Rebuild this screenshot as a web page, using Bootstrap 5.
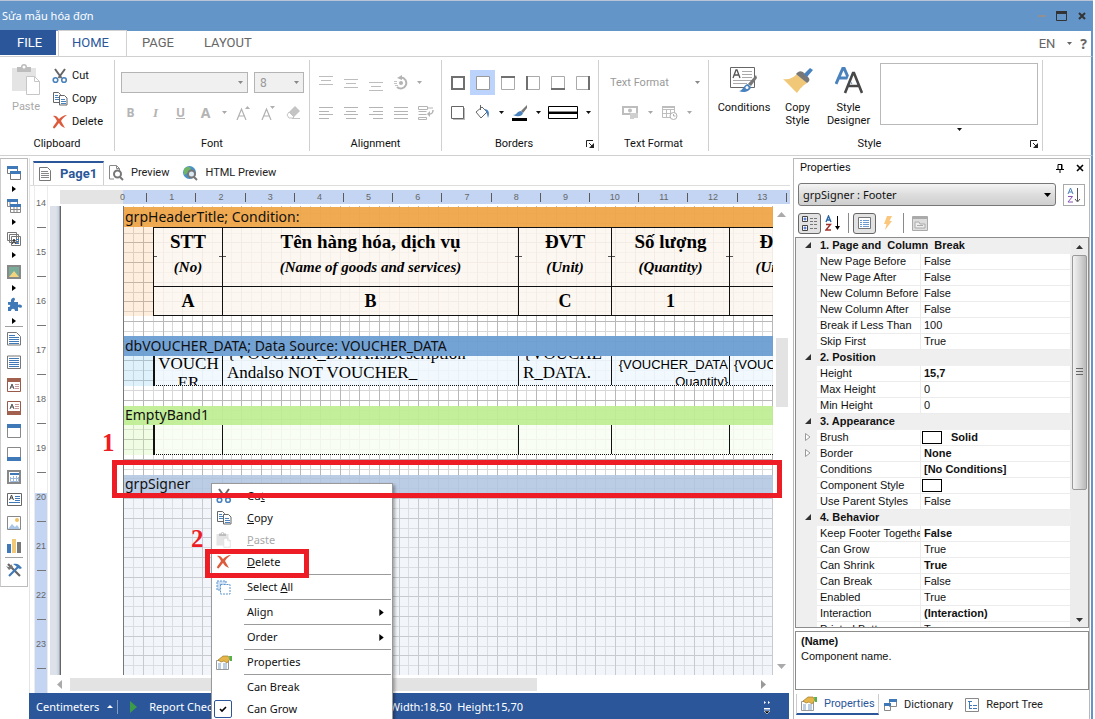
<!DOCTYPE html>
<html lang="vi">
<head>
<meta charset="utf-8">
<meta name="viewport" content="width=device-width, initial-scale=1">
<title>Sửa mẫu hóa đơn</title>
<link href="https://cdn.jsdelivr.net/npm/bootstrap@5.3.0/dist/css/bootstrap.min.css" rel="stylesheet">
<style>
:root{--ui:"Noto Sans","Open Sans",sans-serif;--rib:Roboto,"Open Sans",sans-serif;--navy:#2b579a;--sky:#6495c8;--rule:#d0d0d0}
body{font:11px/16px var(--ui);color:#111;background:#fff;overflow:hidden}
button{border:0;background:none;padding:0;color:inherit;font:inherit}
svg{display:block;flex:none}
.frame-edge{border-right:2px solid var(--sky);margin-right:2px}
.titlebar{height:31px;background:var(--sky);border-top:1px solid #b9c4d8;color:#fff;padding-left:2px;padding-right:5px;margin-right:2px}
.ribbon-tabs{height:26px;border-bottom:1px solid var(--rule)}
.ribbon-tabs .nav-link{font:13px/24px var(--rib);height:25px;padding:0 14px;color:#666;border:1px solid transparent;border-bottom:0;border-radius:0}
.ribbon-tabs .file-tab{background:var(--navy);color:#fff;width:56px;padding:0 16px}
.ribbon-tabs .nav-link.active{color:var(--navy);border-color:var(--rule);background:#fff;height:26px;width:69px;margin:0 0 0 2px;padding:0 13px}
.ribbon{height:99px;border-bottom:1px solid var(--rule);padding-top:3px;font-family:var(--rib);line-height:13px}
.rgroup{height:91px;border-right:1px solid var(--rule)}
.rgroup>.ps-1{padding-left:3px!important}
.rgroup .glabel{height:14px;margin-bottom:0}
.r-on{height:25px;align-items:center}
.r-top{padding-top:10px;row-gap:5px}
.cell{width:25px;height:25px;display:flex;align-items:center;justify-content:center}
.cell.on{background:#bcd3fb}
.wctl{width:12px}
.drop{width:12px;height:25px;display:flex;align-items:center;justify-content:center}
.dim{color:#a8a8a8}
.glyph{font:bold 14px/25px var(--ui);color:#b4b4b4}
.glyph.s{font-size:12px}
.pick{appearance:none;border:1px solid #b4b4b4;background:#f0f0f0 url("data:image/svg+xml,%3Csvg xmlns='http://www.w3.org/2000/svg' width='5' height='3'%3E%3Cpath d='M0 0h5L2.5 3z' fill='%23888'/%3E%3C/svg%3E") no-repeat right 4px center;height:21px;padding:0 5px;color:#999;font:12px/18px var(--rib);border-radius:0}
.pick.flat{border:0;background-color:transparent;font-size:11px;padding:0 3px}
.bigbtn{display:flex;flex-direction:column;align-items:center;width:51px;padding-top:7px;gap:7px}
.bigbtn.wide{width:56px}
.gallery{width:158px;height:62px;border:1px solid #b9b9b9}
.toolcol{width:28px;border:1px solid #bcbcbc;border-left-color:#ccc;padding:2px 0 5px}
.toolcol button{height:23px;width:100%;display:flex;justify-content:center;align-items:center}
.toolcol .more{height:10px}
.toolcol hr{margin:0 4px;opacity:.4}
.doc-tabs{height:28px;border-bottom:1px solid #ddd;font:12px/16px var(--rib);padding-left:3px}
.doc-tabs a{color:#222;text-decoration:none;display:flex;align-items:center;gap:7px}
.doc-tabs a.current{color:var(--navy);font-weight:bold;font-size:13px;border:1px solid var(--rule);border-top:2px solid var(--navy);border-bottom:0;width:71px;height:24px;padding:0 5px;gap:9px;background:#fff}
.doc-tabs a.idle{height:24px;padding:0 5px;font-size:11px}
.docarea{border-left:1px solid #e4e4e4;min-width:0;flex:1 1 0;margin-left:1px}
.ruler-h{height:14px;margin-left:12px;background:linear-gradient(90deg,#e4e4e4 63px,#c3d5f3 63px);overflow:hidden;padding-left:38px}
.ruler-h ol{width:738px;height:14px;margin:0;padding:0;list-style:none}
.ruler-h li{flex:1;text-align:center;background:linear-gradient(#5a5a5a,#5a5a5a) right center/1px 9px no-repeat}
.ruler-h li,.ruler-v li{font:9px/14px "Liberation Sans",Arial,sans-serif;color:#666}
.ruler-v{width:14px;margin-left:4px;border:1px solid #ececec;border-width:0 1px;background:linear-gradient(#fff 307px,#c3d5f3 307px)}
.ruler-v ol{margin:0;padding:0;list-style:none}
.ruler-v li{height:49px;line-height:48px;text-align:center;background:linear-gradient(#777,#777) center bottom/9px 1px no-repeat}
.ruler-v li.cut{height:42px;line-height:34px}
.gutter{width:11px;background:linear-gradient(90deg,#dde2ea 60%,#c9d2df 85%,#8e959e);border-right:1px solid #666}
.page-blank{width:62px;background:#fff}
.page-grid{border-left:1px solid #777;overflow:hidden;min-width:0;padding-top:1px;background-color:#fff;
 background-image:
  linear-gradient(90deg,transparent 19px,#b8b8b8 19px 20px,transparent 20px 39px,#b8b8b8 39px 40px,transparent 40px 58px,#b8b8b8 58px),
  linear-gradient(#b8b8b8 1px,transparent 1px 20px,#b8b8b8 20px 21px,transparent 21px 39px,#b8b8b8 39px 40px,transparent 40px),
  linear-gradient(90deg,transparent 9px,#d8d8d8 9px 10px,transparent 10px 29px,#d8d8d8 29px 30px,transparent 30px 48px,#d8d8d8 48px 49px,transparent 49px),
  linear-gradient(transparent 10px,#d8d8d8 10px 11px,transparent 11px 30px,#d8d8d8 30px 31px,transparent 31px 49px,#d8d8d8 49px 50px,transparent 50px);
 background-size:59px 59px;background-position:0 -3px}
.band{height:20px;font:14px/20px var(--ui);padding-left:1px;white-space:nowrap;flex:none}
.band.orange{background:#efa548f2}.band.blue{background:#6b9dd3f2}
.band.green{background:#beed92ed;height:19px;line-height:18px}.band.steel{background:#b4c7e2e6;height:19px;line-height:18px}
.band-body{padding-left:29px;margin-bottom:20px}
.tint-o{background:#f8b06a38}.tint-b{background:#9fd4f455}.tint-g{background:#d6f7b055}.tint-s{background:#dfe8f466}
.rep{table-layout:fixed;width:700px;border-collapse:separate;border-spacing:0;font-family:"Liberation Serif","Times New Roman",serif;color:#000;text-align:center}
.rep col.c1{width:69px}.rep col.c2{width:296px}.rep col.c3{width:93px}.rep col.c4{width:118px}.rep col.c5{width:124px}
.rep td,.rep th{padding:0;border-left:2px solid #111;vertical-align:top}
.rep th+th,.rep td+td{border-left-width:1px}
.rep th{border-left-width:1px}
.tint-o .rep{background:#fcf9f6cc}.tint-b .rep{background:#f6fbffcc}.tint-g .rep{background:#fbfef8cc}
.rep .hd th{border-top:1px solid #111;height:59px;background:linear-gradient(#555,#555) 0 28px/3px 1px no-repeat,linear-gradient(#555,#555) 100% 28px/3px 1px no-repeat}
.rep .hd b{display:block;font-size:19px;line-height:27px}
.rep .hd i{display:block;font-size:15px;line-height:25px}
.rep .letters th{border-top:1px solid #111;border-bottom:1px solid #111;height:30px;font-size:18px;line-height:28px}
.rep .clip{height:29px;overflow:hidden;display:flex;flex-direction:column;justify-content:center;font-size:17px;line-height:19px;white-space:nowrap;padding-top:4px}
.rep .clip.sans{font:13px/17px "Liberation Sans",Arial,sans-serif;text-align:right;padding:5px 1px 0 0}
.tint-b .rep,.tint-g .rep{border-bottom:1px dotted #111}
.vscroll{width:17px;padding:6px 2px}
.vscroll .thumb{width:12px;height:69px;background:#e3e3e3;margin-top:121px}
.hscroll{height:18px;padding-left:27px;padding-right:24px}
.hscroll .thumb{width:467px;height:13px;background:#e3e3e3;margin-left:8px}
.status{height:26px;background:var(--navy);color:#fff;padding:1px 18px 0 7px;margin-left:-1px;margin-right:1px}
.status .size{margin-right:240px}
.ctx{left:181px;top:325px;width:182px;background:#fff;border:1px solid #999;box-shadow:2px 2px 3px #0005;z-index:2;padding-top:1px}
.ctx button{display:flex;align-items:center;height:22px;width:100%;color:#111;text-align:left}
.ctx button:disabled{color:#a8a8a8}
.ctx .ico{width:35px;padding-left:4px}
.ctx hr{margin:1px 1px 1px 32px;border:0;border-top:1px solid #9b9b9b;opacity:1}
.ctx .tick{display:flex;width:18px;height:18px;border:1px solid var(--navy);border-radius:2px;margin-left:-2px;align-items:center;justify-content:center}
.callout{border:5px solid #ee1c25;z-index:3;pointer-events:none}
.callout-row{left:82px;right:8px;top:302px;height:38px}
.callout-item{left:175px;top:391px;width:104px;height:29px}
.num{font:bold 25px/26px "Liberation Serif",serif;color:#ee1c25;z-index:3}
.num-1{left:72px;top:272px}.num-2{left:161px;top:368px}
.side{width:297px;border:1px solid #b9b9b9;border-bottom:0;margin-left:3px;margin-right:1px;font:11px/16px "Liberation Sans",Arial,sans-serif}
.side .head{font:11px/18px var(--rib);padding:0 4px 0 6px;height:19px}
.objrow{padding:6px 4px 5px 4px;gap:7px}
.objsel{appearance:none;border:1px solid #777;border-radius:3px;height:23px;width:260px;padding:0 4px;font:11px/18px var(--ui);color:#111;background:url("data:image/svg+xml,%3Csvg xmlns='http://www.w3.org/2000/svg' width='7' height='4'%3E%3Cpath d='M0 0h7L3.5 4z'/%3E%3C/svg%3E") no-repeat right 4px center,linear-gradient(#f4f4f4,#ddd 50%,#cfcfcf)}
.sq{width:22px;height:22px;border:1px solid #aaa;display:flex;align-items:center;justify-content:center;flex:none}
.pbar{padding:0 4px;height:24px;margin-bottom:2px}
.pbtn{width:23px;height:21px;display:flex;align-items:center;justify-content:center}
.pbtn.on{border:1px solid #666;border-radius:3px;background:#e2e2e2}
.vr1{width:1px;height:20px;background:#8a8a8a}
.props{border:1px solid #8c8c8c;margin:0 0 0 1px;min-height:0;overflow:hidden;background:#efefef}
.pt{width:275px;table-layout:fixed;border-collapse:separate;border-spacing:0}
.pt col.c1{width:21px}.pt col.c2{width:104px}
.pt th,.pt td{height:16px;padding:0;white-space:nowrap;overflow:hidden;font-weight:normal;line-height:15px}
.pt td,.pt tbody th{background:#fff;border-bottom:1px solid #ececec;border-right:1px solid #ececec;padding-left:3px}
.pt tbody td.g{background:#efefef;border-color:#efefef;padding-left:9px}
.pt tbody th.cat{background:#efefef;border:0;font-weight:bold;white-space:pre}
.swatch{display:inline-block;width:20px;height:13px;border:1px solid #000;vertical-align:middle;margin-left:-2px;margin-right:9px;background:#fff}
.pscroll{width:17px;background:#ececec;padding:7px 0 5px;row-gap:6px}
.pscroll .bar{height:235px;width:15px;border:1px solid #999;border-radius:2px;background:linear-gradient(90deg,#f3f3f3,#d8d8d8 50%,#b9b9b9)}
.desc{height:59px;border:1px solid #8c8c8c;margin:3px 0 0 1px;padding:2px 5px;line-height:15px;flex:none}
.side-tabs{height:29px;padding-top:4px;font:11px/16px var(--rib);margin-left:2px;flex:none}
.side-tabs a{display:flex;align-items:center;gap:7px;color:#222;text-decoration:none;height:21px;padding:0 7px 0 5px}
.side-tabs a.current{color:var(--navy);border-bottom:2px solid var(--navy);border-right:1px solid #ccc;border-left:1px solid #ccc;width:83px;padding-left:4px}
</style>
</head>
<body class="vh-100 d-flex flex-column">
<svg width="0" height="0" class="position-absolute" aria-hidden="true">
 <symbol id="cut" viewBox="0 0 16 16"><path d="M3 1l6.500 9M13 1L6.500 10" stroke="#666" stroke-width="2" fill="none"/><g fill="none" stroke="#4a82bd" stroke-width="1.600"><circle cx="3.500" cy="12" r="2.300"/><circle cx="12" cy="12" r="2.300"/></g></symbol>
 <symbol id="copy" viewBox="0 0 16 16"><path d="M1.500 1.500h5l2 2v8h-7z" fill="#fff" stroke="#666"/><path d="M3 4.500h3M3 6.500h4M3 8.500h4" stroke="#4a82bd"/><path d="M7.500 4.500h5l2.500 2.500v7H7.500z" fill="#fff" stroke="#666"/><path d="M9 8.500h4M9 10.500h5M9 12.500h5" stroke="#4a82bd"/></symbol>
 <symbol id="del" viewBox="0 0 16 16"><path d="M1 2c2-1 4 0 6 3 2-2 5-4 8-4-3 2-5 4-6 6l4 7c-3-1-5-3-6-5-2 2-3 4-4 5-1 1-2 0-2-1 1-2 3-4 4-6C4 5 3 3 1 2z" fill="#dc5b3c"/></symbol>
 <symbol id="paste" viewBox="0 0 30 32"><path d="M1 4h24v9H15v14H1z" fill="#e4e4e4"/><path d="M6 3h4a3 3 0 0 1 6 0h4v5H6z" fill="#bdbdbd"/><circle cx="13" cy="3" r="1.500" fill="#fff"/><path d="M15.500 12.500h8l5 5v13h-13zM23.500 12.500v5h5" fill="#fff" stroke="#c6c6c6"/></symbol>
 <symbol id="dn" viewBox="0 0 5 3"><path d="M0 0h5L2.500 3z" fill="currentColor"/></symbol>
 <symbol id="rt" viewBox="0 0 4 6"><path d="M0 0l4 3-4 3z" fill="#000"/></symbol>
 <symbol id="launch" viewBox="0 0 8 8"><path d="M.5 7V.5H7" fill="none" stroke="#222"/><path d="M3 3l3 3" stroke="#222"/><path d="M8 3v5H3z" fill="#222"/></symbol>
 <symbol id="hand" viewBox="0 0 16 15"><path d="M.5 5.500h12v9H.5z" fill="#fff" stroke="#999"/><path d="M2 9h3M7 9h4M2 11h3M7 11h4M2 13h3M7 13h4" stroke="#7f9ec4"/><path d="M2 5l5-4h5l2 3-3 4-3-2-3 1z" fill="#e5b54a" stroke="#a17a2a" stroke-width=".7"/><path d="M13 1h3v5h-2z" fill="#55b24a"/></symbol>
</svg>

<header class="titlebar d-flex align-items-center justify-content-between flex-shrink-0">
 <span>Sửa mẫu hóa đơn</span>
 <div class="d-flex align-items-center gap-2">
  <button class="cell wctl" aria-label="Minimize"><svg width="8" height="2"><path d="M0 0h8v2H0z" fill="#8f8f94"/></svg></button>
  <button class="cell wctl" aria-label="Maximize"><svg width="12" height="11"><path d="M.5.5h10v9H.5z" fill="none" stroke="#333"/><path d="M0 0h11v3H0z" fill="#333"/></svg></button>
  <button class="cell wctl" aria-label="Close"><svg width="8" height="8"><path d="M1 1l6 6M7 1L1 7" stroke="#333" stroke-width="2"/></svg></button>
 </div>
</header>

<nav class="ribbon-tabs frame-edge d-flex align-items-end justify-content-between flex-shrink-0" aria-label="Ribbon">
 <div class="nav flex-nowrap">
  <a class="nav-link file-tab" href="#">FILE</a>
  <a class="nav-link active" href="#">HOME</a>
  <a class="nav-link" href="#">PAGE</a>
  <a class="nav-link" href="#">LAYOUT</a>
 </div>
 <div class="d-flex align-items-center gap-2 pe-1" style="color:#666">
  <button class="d-flex align-items-center gap-2" style="font:13px/25px var(--rib)">EN <svg class="ms-1" width="5" height="3"><use href="#dn"/></svg></button>
  <button style="font:bold 14px/25px var(--ui)">?</button>
 </div>
</nav>

<section class="ribbon frame-edge d-flex flex-shrink-0" aria-label="Home">
 <div class="rgroup d-flex flex-column" style="width:115px">
  <div class="flex-grow-1 d-flex gap-2 ps-2">
   <button class="d-flex flex-column align-items-center dim gap-1 pt-1" style="width:36px"><svg width="30" height="32"><use href="#paste"/></svg>Paste</button>
   <div class="d-flex flex-column pt-1">
    <button class="d-flex align-items-center gap-1" style="height:23px"><svg width="16" height="16"><use href="#cut"/></svg>Cut</button>
    <button class="d-flex align-items-center gap-1" style="height:23px"><svg width="16" height="16"><use href="#copy"/></svg>Copy</button>
    <button class="d-flex align-items-center gap-1" style="height:23px"><svg width="16" height="16"><use href="#del"/></svg>Delete</button>
   </div>
  </div>
  <div class="glabel text-center">Clipboard</div>
 </div>

 <div class="rgroup d-flex flex-column" style="width:195px">
  <div class="flex-grow-1 d-flex flex-column ps-1 r-top">
   <div class="d-flex r-on" style="gap:6px;padding-left:3px">
    <select class="pick" style="width:127px" aria-label="Font name" disabled><option></option></select>
    <select class="pick" style="width:50px" aria-label="Font size" disabled><option>8</option></select>
   </div>
   <div class="d-flex r-on">
    <button class="cell glyph s">B</button>
    <button class="cell glyph" style="font:italic bold 13px 'Liberation Serif',serif">I</button>
    <button class="cell glyph s text-decoration-underline">U</button>
    <button class="cell glyph">A</button>
    <button class="drop dim" aria-label="Text colour"><svg width="5" height="3"><use href="#dn"/></svg></button>
    <button class="cell dim" aria-label="Grow font"><svg width="14" height="14"><path d="M1 14L5.500 3 10 14M2.500 10h6" fill="none" stroke="#b0b0b0" stroke-width="1.200"/><path d="M9 3h5l-2.500-3z" fill="#b0b0b0"/></svg></button>
    <button class="cell dim" aria-label="Shrink font"><svg width="14" height="14"><path d="M1 14L5.500 3 10 14M2.500 10h6" fill="none" stroke="#b0b0b0" stroke-width="1.200"/><path d="M9 0h5l-2.500 3z" fill="#b0b0b0"/></svg></button>
    <button class="cell" aria-label="Clear"><svg width="14" height="13"><path d="M3 6l6-6 5 5-6 6z" fill="#c4c4c4"/><path d="M3 6l5 5-1 1H3L1 9z" fill="#fff" stroke="#c4c4c4"/><path d="M6 12.500h8" stroke="#c4c4c4"/></svg></button>
   </div>
  </div>
  <div class="glabel text-center">Font</div>
 </div>

 <div class="rgroup d-flex flex-column" style="width:132px">
  <div class="flex-grow-1 d-flex flex-column ps-1 r-top">
   <div class="d-flex r-on">
    <button class="cell" aria-label="Top"><svg width="14" height="14"><path d="M0 .5h14M2 4.500h10M0 8.500h14" stroke="#bdbdbd"/></svg></button>
    <button class="cell" aria-label="Middle"><svg width="14" height="14"><path d="M0 3.500h14M2 7.500h10M0 11.500h14" stroke="#bdbdbd"/></svg></button>
    <button class="cell" aria-label="Bottom"><svg width="14" height="16"><path d="M0 7.500h14M2 11.500h10M0 15.500h14" stroke="#bdbdbd"/></svg></button>
    <button class="cell" aria-label="Rotate"><svg width="14" height="15"><path d="M7 2.500a5.500 5.500 0 1 1-4 9.500" fill="none" stroke="#b4b4b4" stroke-width="2"/><path d="M8 0v5L3 3z" fill="#b4b4b4"/><circle cx="7" cy="8" r="2" fill="#b4b4b4"/><path d="M0 6.500h3M0 8.500h3M1 10.500h3" stroke="#c4c4c4"/></svg></button>
    <button class="drop dim" aria-label="Rotation"><svg width="5" height="3"><use href="#dn"/></svg></button>
   </div>
   <div class="d-flex r-on">
    <button class="cell" aria-label="Left"><svg width="14" height="12"><path d="M0 .5h14M0 4.500h10M0 7.500h14M0 11.500h10" stroke="#b4b4b4"/></svg></button>
    <button class="cell" aria-label="Centre"><svg width="14" height="12"><path d="M0 .5h14M2 4.500h10M0 7.500h14M2 11.500h10" stroke="#b4b4b4"/></svg></button>
    <button class="cell" aria-label="Right"><svg width="14" height="12"><path d="M0 .5h14M4 4.500h10M0 7.500h14M4 11.500h10" stroke="#b4b4b4"/></svg></button>
    <button class="cell" aria-label="Justify"><svg width="14" height="12"><path d="M0 .5h14M0 4.500h14M0 7.500h14M0 11.500h14" stroke="#b4b4b4"/></svg></button>
    <button class="cell" aria-label="Wrap"><svg width="16" height="16"><path d="M.5 1.500h9v3h-9zM.5 6.500h8M.5 9.500h8M.5 12.500h8v2h-8zM10 3h5" fill="none" stroke="#b4b4b4"/><path d="M15 5c0 4-2 4-4 4" fill="none" stroke="#b4b4b4" stroke-width="1.500"/><path d="M12 6v6l-3-3z" fill="#b4b4b4"/></svg></button>
   </div>
  </div>
  <div class="glabel text-center">Alignment</div>
 </div>

 <div class="rgroup d-flex flex-column" style="width:157px">
  <div class="flex-grow-1 d-flex flex-column ps-1 r-top">
   <div class="d-flex r-on">
    <button class="cell" aria-label="All"><svg width="14" height="14"><path d="M1 1h12v12H1z" fill="#fff" stroke="#707070" stroke-width="2"/></svg></button>
    <button class="cell on" aria-label="None"><svg width="14" height="14"><path d="M.5.5h13v13H.5z" fill="#fff" stroke="#999"/></svg></button>
    <button class="cell" aria-label="Top border"><svg width="14" height="14"><path d="M.5.5h13v13H.5z" fill="#fff" stroke="#aaa"/><path d="M0 0h14v2H0z" fill="#707070"/></svg></button>
    <button class="cell" aria-label="Left border"><svg width="14" height="14"><path d="M.5.5h13v13H.5z" fill="#fff" stroke="#aaa"/><path d="M0 0h2v14H0z" fill="#707070"/></svg></button>
    <button class="cell" aria-label="Bottom border"><svg width="14" height="14"><path d="M.5.5h13v13H.5z" fill="#fff" stroke="#aaa"/><path d="M0 12h14v2H0z" fill="#707070"/></svg></button>
    <button class="cell" aria-label="Right border"><svg width="14" height="14"><path d="M.5.5h13v13H.5z" fill="#fff" stroke="#aaa"/><path d="M12 0h2v14h-2z" fill="#707070"/></svg></button>
   </div>
   <div class="d-flex r-on">
    <button class="cell" aria-label="Shadow"><svg width="14" height="14"><path d="M2 2h12v12H2z" fill="#bbb"/><path d="M.5.500h12v12H.5z" fill="#fff" stroke="#666"/></svg></button>
    <button class="cell" aria-label="Fill"><svg width="15" height="15"><path d="M1 7l6-5 5 5-6 6z" fill="#fff" stroke="#666"/><path d="M5.500 0v5" stroke="#666"/><path d="M9 4c5 0 6 4 4 9-1-4-1-6-4-9z" fill="#4a82bd"/></svg></button>
    <button class="drop" aria-label="Fill colour"><svg width="5" height="3"><use href="#dn"/></svg></button>
    <button class="cell" aria-label="Line colour"><svg width="16" height="16"><path d="M9 6l6-6v3l-4 5z" fill="#777"/><path d="M1 10c4 0 4-4 8-4l2 2c-1 4-6 4-10 2z" fill="#4a82bd"/><path d="M0 13h15v3H0z"/></svg></button>
    <button class="drop" aria-label="Line colours"><svg width="5" height="3"><use href="#dn"/></svg></button>
    <button class="d-flex align-items-center gap-2 ms-1" aria-label="Line style"><svg width="30" height="13"><path d="M.5.500h29v12H.5z" fill="#fff" stroke="#000"/><path d="M1 5.500h28" stroke="#888"/><path d="M1 7h28" stroke="#000" stroke-width="2"/></svg><svg width="5" height="3"><use href="#dn"/></svg></button>
   </div>
  </div>
  <div class="glabel d-flex"><span class="flex-grow-1 text-center">Borders</span><button class="pe-1" aria-label="Borders dialog"><svg width="8" height="8"><use href="#launch"/></svg></button></div>
 </div>

 <div class="rgroup d-flex flex-column" style="width:110px">
  <div class="flex-grow-1 d-flex flex-column r-top ps-1">
   <div class="d-flex r-on ps-2 pe-1"><select class="pick flat w-100 ps-0" aria-label="Text format" disabled><option>Text Format</option></select></div>
   <div class="d-flex r-on ps-3" style="gap:1px">
    <button class="cell" aria-label="Currency"><svg width="17" height="15"><path d="M1 2h14v7H1z" fill="none" stroke="#bdbdbd" stroke-width="2"/><circle cx="8" cy="5.500" r="2" fill="#bdbdbd"/><path d="M8 8h8v5h-4v1H8z" fill="#cfcfcf"/></svg></button>
    <button class="drop dim" aria-label="Currency formats"><svg width="5" height="3"><use href="#dn"/></svg></button>
    <button class="cell" aria-label="Date"><svg width="16" height="15"><path d="M.5 1.500h12v11H.5zM.5 4.500h12M4.500 4v8M8.500 4v8M.5 8.500h12" fill="none" stroke="#bdbdbd"/><path d="M0 1h13v2H0z" fill="#bdbdbd"/><circle cx="11.500" cy="11" r="3.500" fill="#fff" stroke="#b0b0b0"/><path d="M11.500 9v2h2" fill="none" stroke="#b0b0b0"/></svg></button>
    <button class="drop dim" aria-label="Date formats"><svg width="5" height="3"><use href="#dn"/></svg></button>
   </div>
  </div>
  <div class="glabel text-center">Text Format</div>
 </div>

 <div class="rgroup d-flex flex-column" style="width:334px">
  <div class="flex-grow-1 d-flex" style="padding-left:7px">
   <button class="bigbtn wide"><svg width="28" height="27"><path d="M.5.5h24v20H.5z" fill="#fff" stroke="#666"/><path d="M3 11l3-8h1l3 8M4 8h5" fill="none" stroke="#555" stroke-width="1.300"/><path d="M12 4.500h10M12 7.500h10M12 10.500h10M3 13.500h19M3 16.500h14" stroke="#aaa"/><path d="M18 17l8-9 1 3-6 8z" fill="#777"/><path d="M9 24c4 0 4-6 9-7l3 3c-1 5-8 6-12 4z" fill="#4a82bd"/><circle cx="17" cy="20.500" r="1.500" fill="#fff"/></svg>Conditions</button>
   <button class="bigbtn"><svg width="30" height="27"><path d="M0 12c6 1 10-1 14-5l10 9c-5 3-7 6-10 10C9 21 5 17 0 12z" fill="#f0c878"/><path d="M13 7c3-4 6-3 8-1l4 4c2 2 2 4-1 6z" fill="#777"/><path d="M21 7l6-6 3 2-6 7z" fill="#4a82bd"/></svg>Copy<br>Style</button>
   <button class="bigbtn"><svg width="28" height="27"><path d="M1 17L8 1h1l7 16M4 11h10" fill="none" stroke="#4a82bd" stroke-width="3"/><path d="M9 27L18 5h1l8 22M12 20h13" fill="none" stroke="#fff" stroke-width="5"/><path d="M10 26l8-20h1l8 20M13 19h11" fill="none" stroke="#484848" stroke-width="2.600"/></svg>Style<br>Designer</button>
   <div class="d-flex flex-column align-items-center" style="padding:3px 0 0 6px;gap:3px"><div class="gallery"></div><button aria-label="More styles"><svg width="5" height="3"><use href="#dn"/></svg></button></div>
  </div>
  <div class="glabel d-flex"><span class="flex-grow-1 text-center">Style</span><button class="pe-1" aria-label="Style dialog"><svg width="8" height="8"><use href="#launch"/></svg></button></div>
 </div>
</section>

<main class="frame-edge flex-grow-1 d-flex overflow-hidden" style="padding-top:2px">
 <aside class="toolcol align-self-start flex-shrink-0" aria-label="Toolbox">
  <button aria-label="Bands"><svg width="14" height="14"><path d="M.5.5h10v7H.5zM3.500 5.500h10v8h-10z" fill="#fff" stroke="#777"/><path d="M0 0h11v3H0zM3 5h11v3H3z" fill="#3f79b8"/></svg></button>
  <button class="more" aria-label="More bands"><svg width="4" height="6"><use href="#rt"/></svg></button>
  <button aria-label="Cross bands"><svg width="14" height="14"><path d="M.5.5h10v7H.5zM3.500 5.500h10v8h-10zM7 8v5M10 8v5M4 10.500h9M3 3v4" fill="#fff" stroke="#888"/><path d="M0 0h11v3H0zM3 5h11v3H3z" fill="#3f79b8"/></svg></button>
  <button class="more" aria-label="More cross bands"><svg width="4" height="6"><use href="#rt"/></svg></button>
  <button aria-label="Components"><svg width="14" height="14"><path d="M.5.5h9v8h-9zM2.500 2.500h9v8h-9zM4.500 4.500h9v9h-9z" fill="#fff" stroke="#777"/><path d="M9 7.500h3M9 9.500h3M9 11.500h3" stroke="#3f79b8"/><path d="M5.500 12l1.500-5 1.500 5" fill="none" stroke="#333"/></svg></button>
  <button class="more" aria-label="More components"><svg width="4" height="6"><use href="#rt"/></svg></button>
  <button aria-label="Shapes"><svg width="14" height="14"><path d="M1 1h12v12H1z" fill="#78ab98" stroke="#888" stroke-width="2"/><path d="M2 12l5-6 5 6z" fill="#f3d47e"/></svg></button>
  <button class="more" aria-label="More shapes"><svg width="4" height="6"><use href="#rt"/></svg></button>
  <button aria-label="Plugins"><svg width="15" height="15"><path d="M1 5h3c-1-3 3-6 4-3 0 1-1 2-1 3h4v3c2-1 4 0 4 1.500S13 11 11 10v4H8c0-3-4-3-4 0H1v-4c3 0 3-3 0-2z" fill="#3f79b8"/></svg></button>
  <button class="more" aria-label="More plugins"><svg width="4" height="6"><use href="#rt"/></svg></button>
  <hr>
  <button aria-label="Report title"><svg width="14" height="14"><path d="M.5.500h9l4 4V13H.5z" fill="#fff" stroke="#777"/><path d="M2 3.500h6M2 5.500h10M2 7.500h10M2 9.500h10M2 11.500h10" stroke="#3f79b8"/></svg></button>
  <button aria-label="Summary"><svg width="14" height="14"><path d="M.5 1h13v12.500H.5z" fill="#fff" stroke="#777"/><path d="M2 3.500h10M2 5.500h10M2 7.500h10M2 9.500h10M2 11.500h10" stroke="#3f79b8"/></svg></button>
  <button aria-label="Header"><svg width="14" height="14"><path d="M.5.5h13v13H.5z" fill="#fff" stroke="#9a5a4a"/><path d="M0 0h14v4H0z" fill="#a2604f"/><path d="M3 11l2-5 2 5M3.500 9h3" fill="none" stroke="#555"/><path d="M8 6.500h4M8 8.500h4M8 10.500h4" stroke="#c99"/></svg></button>
  <button aria-label="Footer"><svg width="14" height="14"><path d="M.5.5h13v13H.5z" fill="#fff" stroke="#9a5a4a"/><path d="M0 10h14v4H0z" fill="#a2604f"/><path d="M3 8l2-5 2 5M3.500 6h3" fill="none" stroke="#555"/><path d="M8 3.500h4M8 5.500h4M8 7.500h4" stroke="#c99"/></svg></button>
  <button aria-label="Page header"><svg width="14" height="14"><path d="M.5.5h13v13H.5z" fill="#fff" stroke="#888"/><path d="M0 0h14v4H0z" fill="#3f79b8"/></svg></button>
  <button aria-label="Page footer"><svg width="14" height="14"><path d="M.5.5h13v13H.5z" fill="#fff" stroke="#888"/><path d="M0 10h14v4H0z" fill="#3f79b8"/></svg></button>
  <button aria-label="Data band"><svg width="14" height="14"><path d="M1 1h12v12H1z" fill="#fff" stroke="#888" stroke-width="2"/><path d="M3 3h9v2H3z" fill="#3f79b8"/><path d="M3.500 7v4.500h8V7M3 8.500h9M6.500 6v5M9.500 6v5" fill="none" stroke="#9ab8dc"/></svg></button>
  <button aria-label="Text"><svg width="15" height="13"><path d="M.5.5h14v12H.5z" fill="#fff" stroke="#666"/><path d="M2.500 7l2-5 2 5M3 5h3" fill="none" stroke="#444"/><path d="M8 3.500h5M8 5.500h5M8 7.500h5M2 9.500h11" stroke="#3f79b8"/></svg></button>
  <button aria-label="Image"><svg width="14" height="14"><path d="M.5.5h13v13H.5z" fill="#fff" stroke="#888"/><path d="M1 13l4-5 3 3 2-2 3 4z" fill="#a9c6e6"/><circle cx="10" cy="4" r="2" fill="#f0c060"/></svg></button>
  <button aria-label="Chart"><svg width="14" height="14"><path d="M0 5h4v9H0z" fill="#3f79b8"/><path d="M5 0h4v14H5z" fill="#f0c878"/><path d="M10 3h4v11h-4z" fill="#777"/></svg></button>
  <hr>
  <button aria-label="Tools"><svg width="16" height="14"><path d="M2 1l12 12" stroke="#666" stroke-width="2.200"/><path d="M0 3c3 2 5 1 5-2l2 3-4 3z" fill="#777"/><path d="M12 4L3 13" stroke="#3f79b8" stroke-width="2.200"/><path d="M7 1c4-1 6 0 9 4l-2 1-2-1-2-2z" fill="#3f79b8"/></svg></button>
 </aside>

 <section class="docarea position-relative d-flex flex-column">
  <nav class="doc-tabs d-flex align-items-end flex-shrink-0" aria-label="Views">
   <a class="current" href="#"><svg width="12" height="14"><path d="M.5.500h8l3 3v10H.5z" fill="#fff" stroke="#777"/><path d="M2 4.500h7M2 6.500h8M2 8.500h8M2 10.500h8" stroke="#888"/></svg>Page1</a>
   <a class="idle" href="#"><svg width="15" height="16"><path d="M.5 1v13H5M.5.500h7l3 3V6M7.500.500v3h3" fill="none" stroke="#888"/><circle cx="8.500" cy="9" r="3.500" fill="#fff" stroke="#777" stroke-width="2"/><path d="M11 12l3 3" stroke="#777" stroke-width="2"/></svg>Preview</a>
   <a class="idle ms-1" href="#"><svg width="15" height="15"><circle cx="6.500" cy="6.500" r="6.500" fill="#4a90c8"/><path d="M1 3c3-3 6-3 7 0L5 7 1 9z" fill="#6fb568"/><circle cx="8.500" cy="8" r="3.500" fill="#dbe9f5" stroke="#777" stroke-width="2"/><path d="M11 11l3 3" stroke="#777" stroke-width="2"/></svg>HTML Preview</a>
  </nav>
  <div class="flex-grow-1 d-flex" style="min-height:0">
   <div class="ruler-v flex-shrink-0 overflow-hidden"><ol><li class="cut">14</li><li>15</li><li>16</li><li>17</li><li>18</li><li>19</li><li>20</li><li>21</li><li>22</li><li>23</li></ol></div>
   <div class="flex-grow-1 d-flex flex-column pt-1" style="min-width:0">
    <div class="ruler-h flex-shrink-0"><ol class="d-flex"><li>0</li><li>1</li><li>2</li><li>3</li><li>4</li><li>5</li><li>6</li><li>7</li><li>8</li><li>9</li><li>10</li><li>11</li><li>12</li><li>13</li><li></li></ol></div>
    <div class="flex-grow-1 d-flex" style="min-height:0;padding-top:2px;padding-left:2px">
     <div class="gutter flex-shrink-0"></div>
     <div class="page-blank flex-shrink-0"></div>
     <div class="page-grid flex-grow-1 d-flex flex-column">
      <div class="band orange">grpHeaderTitle; Condition:</div>
      <div class="band-body tint-o">
       <table class="rep"><colgroup><col class="c1"><col class="c2"><col class="c3"><col class="c4"><col class="c5"></colgroup>
        <tr class="hd"><th><b>STT</b><i>(No)</i></th><th><b>Tên hàng hóa, dịch vụ</b><i>(Name of goods and services)</i></th><th><b>ĐVT</b><i>(Unit)</i></th><th><b>Số lượng</b><i>(Quantity)</i></th><th><b>Đơn giá</b><i>(Unit price)</i></th></tr>
        <tr class="letters"><th>A</th><th>B</th><th>C</th><th>1</th><th></th></tr>
       </table>
      </div>
      <div class="band blue">dbVOUCHER_DATA; Data Source: VOUCHER_DATA</div>
      <div class="band-body tint-b">
       <table class="rep"><colgroup><col class="c1"><col class="c2"><col class="c3"><col class="c4"><col class="c5"></colgroup>
        <tr><td><div class="clip"><span>VOUCH</span><span>ER</span></div></td><td><div class="clip text-start ps-1"><span>{VOUCHER_DATA.IsDescription</span><span>Andalso NOT VOUCHER_</span><span>DATA.ItemName Is Nothing, total</span></div></td><td><div class="clip text-start ps-1"><span>{VOUCHE</span><span>R_DATA.</span><span>UnitName}</span></div></td><td><div class="clip sans"><span>{VOUCHER_DATA</span><span>Quantity}</span></div></td><td><div class="clip sans text-start ps-1"><span>{VOUCHER_DATA</span><span>&nbsp;</span></div></td></tr>
       </table>
      </div>
      <div class="band green">EmptyBand1</div>
      <div class="band-body tint-g">
       <table class="rep"><colgroup><col class="c1"><col class="c2"><col class="c3"><col class="c4"><col class="c5"></colgroup>
        <tr><td><div class="clip"></div></td><td></td><td></td><td></td><td></td></tr>
       </table>
      </div>
      <div class="band steel">grpSigner</div>
      <div class="tint-s flex-grow-1"></div>
     </div>
     <div class="vscroll d-flex flex-column align-items-center flex-shrink-0">
      <svg width="9" height="5"><path d="M0 5h9L4.500 0z" fill="#aaa"/></svg><div class="thumb"></div><svg class="mt-auto" width="9" height="5"><path d="M0 0h9L4.500 5z" fill="#aaa"/></svg>
     </div>
    </div>
    <div class="hscroll d-flex align-items-center flex-shrink-0" style="padding-left:9px">
     <svg width="5" height="9"><path d="M5 0v9L0 4.500z" fill="#aaa"/></svg><div class="thumb"></div><svg class="ms-auto" width="5" height="9"><path d="M0 0v9l5-4.500z" fill="#999"/></svg>
    </div>
   </div>
  </div>
  <footer class="status d-flex align-items-center flex-shrink-0">
   <button class="me-2">Centimeters</button><svg width="6" height="3"><path d="M0 3h6L3 0z" fill="#fff"/></svg>
   <span class="border-start ms-1 me-2" style="height:14px;opacity:.5"></span>
   <svg width="7" height="12" class="ms-1"><path d="M0 0l7 6-7 6z" fill="#3c9b48"/></svg>
   <button class="ms-2 ps-1">Report Checker</button>
   <span class="size ms-auto">Width:18,50&nbsp; Height:15,70</span>
   <svg width="8" height="14"><path d="M1 1l2 1.500L1 4zM5 1l2 1.500L5 4zM1 8h6v1.500H1z" fill="#fff"/><path d="M1 11h6l-3 3z" fill="#000" stroke="#fff" stroke-width=".6"/></svg>
  </footer>

  <div class="ctx position-absolute" role="menu">
   <button role="menuitem"><span class="ico"><svg width="16" height="16"><use href="#cut"/></svg></span>Cu<u>t</u></button>
   <button role="menuitem"><span class="ico"><svg width="16" height="16"><use href="#copy"/></svg></span><u>C</u>opy</button>
   <button role="menuitem" disabled><span class="ico"><svg width="15" height="16"><use href="#paste"/></svg></span><u>P</u>aste</button>
   <button role="menuitem"><span class="ico"><svg width="16" height="16"><use href="#del"/></svg></span><u>D</u>elete</button>
   <hr>
   <button role="menuitem"><span class="ico"><svg width="15" height="15"><path d="M1 1h9v9H1z" fill="#cfe0f4" stroke="#5b95d0" stroke-dasharray="2 1"/><path d="M4.500 4.500h9.500v9.500H4.500z" fill="#fff" stroke="#5b95d0" stroke-dasharray="2 1"/></svg></span><span>Select <u>A</u>ll</span></button>
   <hr>
   <button role="menuitem"><span class="ico"></span>Align<svg class="ms-auto me-2" width="5" height="7" viewBox="0 0 4 6"><use href="#rt"/></svg></button>
   <hr>
   <button role="menuitem"><span class="ico"></span>Order<svg class="ms-auto me-2" width="5" height="7" viewBox="0 0 4 6"><use href="#rt"/></svg></button>
   <hr>
   <button role="menuitem"><span class="ico"><svg width="16" height="15"><use href="#hand"/></svg></span>Properties</button>
   <hr>
   <button role="menuitem"><span class="ico"></span>Can Break</button>
   <button role="menuitem"><span class="ico"><span class="tick"><svg width="8" height="7"><path d="M1 3l2 2 4-4" fill="none" stroke="#000" stroke-width="1.600"/></svg></span></span>Can Grow</button>
  </div>
  <div class="callout callout-row position-absolute"></div>
  <div class="callout callout-item position-absolute"></div>
  <span class="num num-1 position-absolute">1</span>
  <span class="num num-2 position-absolute">2</span>
 </section>

 <aside class="side d-flex flex-column flex-shrink-0" aria-label="Properties">
  <div class="head d-flex align-items-center justify-content-between"><span>Properties</span>
   <span class="d-flex gap-2"><button aria-label="Pin"><svg width="8" height="9"><path d="M2 .5h4v5H2zM0 5.500h8M4 6v3M5.500 0v5" fill="none" stroke="#000"/></svg></button><button class="ms-1" aria-label="Close"><svg width="9" height="8"><path d="M1 1l6 6M7 1L1 7" stroke="#000" stroke-width="1.600"/></svg></button></span></div>
  <div class="objrow d-flex align-items-center">
   <select class="objsel" aria-label="Component"><option>grpSigner : Footer</option></select>
   <button class="sq" aria-label="Sort"><svg width="14" height="16"><path d="M1 7l2.500-6L6 7M2 5h3" fill="none" stroke="#4a82bd"/><path d="M1 9.500h4.500L1 15h5" fill="none" stroke="#8b52b5"/><path d="M10.500 1v13M8 12l2.500 3 2.500-3" fill="none" stroke="#555"/></svg></button>
  </div>
  <div class="pbar d-flex align-items-center">
   <button class="pbtn on" aria-label="Categorized"><svg width="17" height="17"><path d="M1.500 1.500h5v5h-5zM1.500 10.500h5v5h-5z" fill="#fff" stroke="#444"/><path d="M2.500 4h3M4 2.500v3M2.500 13h3M4 11.500v3" stroke="#2b57c0"/><path d="M9 3.500h3M13 3.500h3M9 6.500h3M13 6.500h3M9 9.500h3M13 9.500h3M9 13.500h3M13 13.500h3" stroke="#777"/></svg></button>
   <button class="pbtn" aria-label="Alphabetical"><svg width="15" height="16"><path d="M1 7l2.500-6L6 7M2 5h3" fill="none" stroke="#2b67a8" stroke-width="1.400"/><path d="M1 9.500h4.500L1 15h5" fill="none" stroke="#a03030" stroke-width="1.400"/><path d="M12.500 1v11" stroke="#000"/><path d="M10 11h5l-2.500 4z"/></svg></button>
   <span class="vr1 mx-1"></span>
   <button class="pbtn on" aria-label="Property list"><svg width="13" height="12"><path d="M.5.5h12v11H.5z" fill="#fff" stroke="#777"/><path d="M2 3.500h2M5 3.500h6M2 5.500h2M5 5.500h6M2 7.500h2M5 7.500h6M2 9.500h2M5 9.500h6" stroke="#6d9bd1"/></svg></button>
   <button class="pbtn" aria-label="Events"><svg width="10" height="14"><path d="M4 0h5L6.500 5H9L2 14l1.500-6H1z" fill="#fbc77c"/></svg></button>
   <span class="vr1 mx-1"></span>
   <button class="pbtn" aria-label="Pages"><svg width="16" height="15"><path d="M.5.5h15v14H.5z" fill="#ddd" stroke="#aaa"/><path d="M1 1h14v2H1z" fill="#aaa"/><path d="M3 6h4l1 2h5v4H3zM5 9.500h6" fill="#eee" stroke="#aaa"/></svg></button>
  </div>
  <div class="props flex-grow-1 d-flex">
   <div class="flex-grow-1 overflow-hidden">
    <table class="pt"><colgroup><col class="c1"><col class="c2"><col></colgroup><tbody>
     <tr><td class="g"><svg width="6" height="6"><path d="M6 0v6H0z" fill="#333"/></svg></td><th class="cat" colspan="2">1. Page and  Column  Break</th></tr>
     <tr><td class="g"></td><th>New Page Before</th><td>False</td></tr>
     <tr><td class="g"></td><th>New Page After</th><td>False</td></tr>
     <tr><td class="g"></td><th>New Column Before</th><td>False</td></tr>
     <tr><td class="g"></td><th>New Column After</th><td>False</td></tr>
     <tr><td class="g"></td><th>Break if Less Than</th><td>100</td></tr>
     <tr><td class="g"></td><th>Skip First</th><td>True</td></tr>
     <tr><td class="g"><svg width="6" height="6"><path d="M6 0v6H0z" fill="#333"/></svg></td><th class="cat" colspan="2">2. Position</th></tr>
     <tr><td class="g"></td><th>Height</th><td><b>15,7</b></td></tr>
     <tr><td class="g"></td><th>Max Height</th><td>0</td></tr>
     <tr><td class="g"></td><th>Min Height</th><td>0</td></tr>
     <tr><td class="g"><svg width="6" height="6"><path d="M6 0v6H0z" fill="#333"/></svg></td><th class="cat" colspan="2">3. Appearance</th></tr>
     <tr><td class="g"><svg width="6" height="8"><path d="M.5.5L5 4 .5 7.500z" fill="#fff" stroke="#999"/></svg></td><th>Brush</th><td><span class="swatch"></span><b>Solid</b></td></tr>
     <tr><td class="g"><svg width="6" height="8"><path d="M.5.5L5 4 .5 7.500z" fill="#fff" stroke="#999"/></svg></td><th>Border</th><td><b>None</b></td></tr>
     <tr><td class="g"></td><th>Conditions</th><td><b>[No Conditions]</b></td></tr>
     <tr><td class="g"></td><th>Component Style</th><td><span class="swatch"></span></td></tr>
     <tr><td class="g"></td><th>Use Parent Styles</th><td>False</td></tr>
     <tr><td class="g"><svg width="6" height="6"><path d="M6 0v6H0z" fill="#333"/></svg></td><th class="cat" colspan="2">4. Behavior</th></tr>
     <tr><td class="g"></td><th>Keep Footer Together</th><td><b>False</b></td></tr>
     <tr><td class="g"></td><th>Can Grow</th><td>True</td></tr>
     <tr><td class="g"></td><th>Can Shrink</th><td><b>True</b></td></tr>
     <tr><td class="g"></td><th>Can Break</th><td>False</td></tr>
     <tr><td class="g"></td><th>Enabled</th><td>True</td></tr>
     <tr><td class="g"></td><th>Interaction</th><td><b>(Interaction)</b></td></tr>
     <tr><td class="g"></td><th>Printed Bottom</th><td>True</td></tr>
    </tbody></table>
   </div>
   <div class="pscroll d-flex flex-column align-items-center flex-shrink-0">
    <svg width="7" height="4"><path d="M0 4h7L3.500 0z" fill="#333"/></svg>
    <div class="bar d-flex align-items-center justify-content-center"><svg width="7" height="9"><path d="M0 .5h7M0 3.500h7M0 6.500h7" stroke="#666"/></svg></div>
    <svg class="mt-auto" width="7" height="4"><path d="M0 0h7L3.500 4z" fill="#333"/></svg>
   </div>
  </div>
  <div class="desc"><b>(Name)</b><br>Component name.</div>
  <nav class="side-tabs d-flex align-items-start" aria-label="Panels">
   <a class="current" href="#"><svg width="16" height="15"><use href="#hand"/></svg>Properties</a>
   <a href="#"><svg width="13" height="12"><path d="M5.500.5h7v7h-7zM.5 5.500h6v6h-6z" fill="#fff" stroke="#888"/><path d="M5 0h8v3H5zM0 4h7v3H0z" fill="#3f79b8"/></svg>Dictionary</a>
   <a href="#"><svg width="14" height="14"><path d="M.5.5h13v13H.5z" fill="#fff" stroke="#888"/><path d="M3 3.500h4M4.500 4v7M4 7.500h3M4 10.500h3M8 7.500h4M8 10.500h4" fill="none" stroke="#3f79b8"/></svg>Report Tree</a>
  </nav>
 </aside>
</main>
<script src="https://cdn.jsdelivr.net/npm/bootstrap@5.3.0/dist/js/bootstrap.bundle.min.js"></script>
</body>
</html>
